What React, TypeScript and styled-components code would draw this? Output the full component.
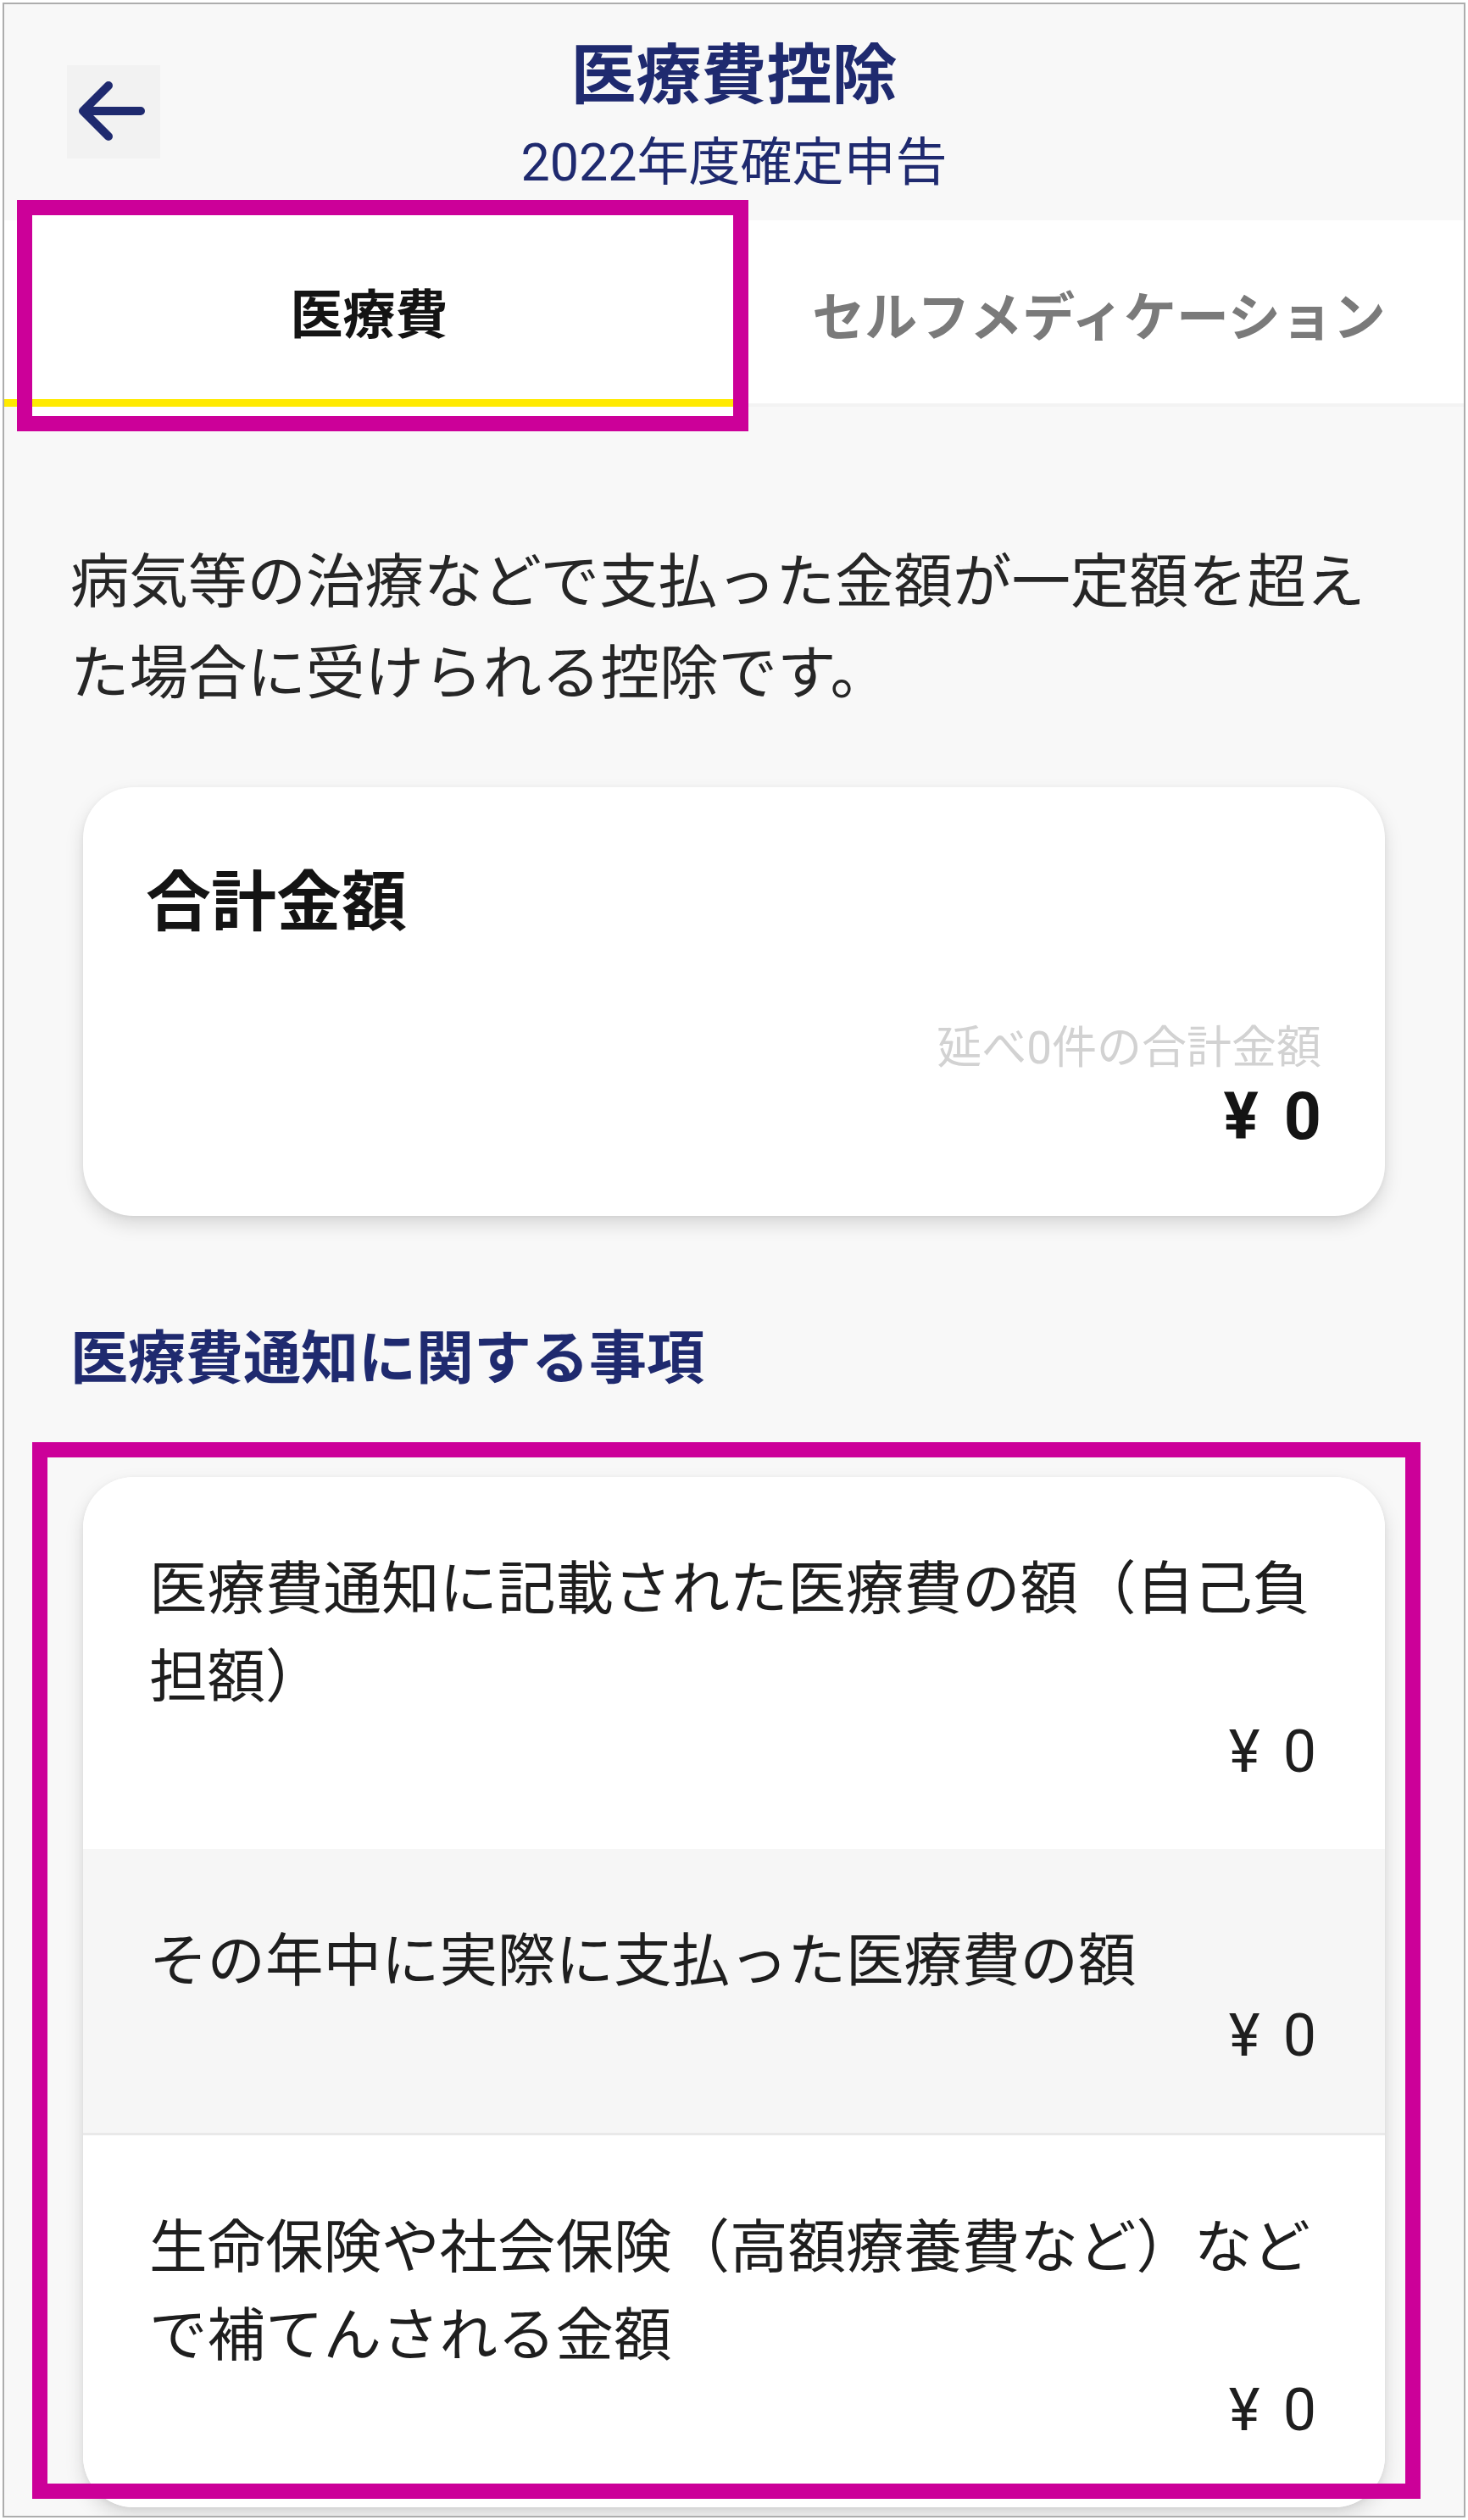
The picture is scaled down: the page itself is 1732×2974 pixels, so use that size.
import React from 'react';
import styled, { createGlobalStyle } from 'styled-components';

const NAVY = '#1f2a6f';
const MAGENTA = '#cc0099';

const GlobalStyle = createGlobalStyle`
  html, body {
    margin: 0;
    padding: 0;
    background: #ffffff;
  }
  body {
    font-family: Roboto, "Noto Sans CJK JP", sans-serif;
    -webkit-font-smoothing: antialiased;
  }
  * {
    box-sizing: border-box;
  }
`;

const Screen = styled.div`
  position: relative;
  margin: 3px;
  width: 1726px;
  height: 2968px;
  border: 2px solid #adadad;
  background: #f8f8f8;
  overflow: hidden;
`;

const Header = styled.header`
  display: grid;
  grid-template-columns: 1fr auto 1fr;
  height: 255px;
  padding-top: 35px;
`;

const BackButton = styled.button`
  justify-self: start;
  align-self: start;
  margin: 37px 0 0 74px;
  width: 110px;
  height: 110px;
  padding: 0;
  border: none;
  background: #f2f2f2;
  display: flex;
  align-items: center;
  justify-content: center;
  cursor: pointer;
`;

const TitleBlock = styled.div`
  display: flex;
  flex-direction: column;
  align-items: center;
  color: ${NAVY};
`;

const Title = styled.h1`
  margin: 0;
  font-size: 77px;
  font-weight: 700;
  line-height: 100px;
`;

const Subtitle = styled.div`
  margin-top: 2px;
  font-size: 61px;
  line-height: 100px;
`;

const TabBar = styled.nav`
  display: grid;
  grid-template-columns: 1fr 1fr;
  height: 220px;
  background: #ffffff;
`;

const Tab = styled.button<{ $active?: boolean }>`
  border: none;
  margin: 0;
  padding: 3px 0 0;
  background: transparent;
  font-family: inherit;
  font-size: 62px;
  font-weight: 700;
  color: ${(props) => (props.$active ? '#141414' : '#7a7a7a')};
  border-bottom: ${(props) => (props.$active ? '9px solid #ffea00' : '4px solid #f3f3f3')};
  cursor: pointer;
`;

const Intro = styled.p`
  margin: 0;
  padding: 154px 78px 0;
  font-size: 69.5px;
  line-height: 108px;
  color: #262626;
`;

const Card = styled.section<{ $gap: number }>`
  margin: ${(props) => props.$gap}px 93px 0;
  background: #ffffff;
  border-radius: 60px;
  overflow: hidden;
  box-shadow: 0 10px 22px rgba(0, 0, 0, 0.13), 0 2px 6px rgba(0, 0, 0, 0.06);
`;

const TotalBody = styled.div`
  padding: 87px 75px 69px 74px;
`;

const CardTitle = styled.h3`
  margin: 0;
  font-size: 77px;
  font-weight: 700;
  line-height: 100px;
  color: #141414;
`;

const CountLabel = styled.div`
  margin-top: 88px;
  text-align: right;
  font-size: 53px;
  line-height: 66px;
  color: #d2d2d2;
`;

const TotalAmount = styled.div`
  text-align: right;
  font-size: 77px;
  font-weight: 700;
  line-height: 96px;
  word-spacing: 0.14em;
  color: #141414;
`;

const SectionHeading = styled.h2`
  margin: 119px 0 0;
  padding: 0 78px;
  font-size: 68px;
  font-weight: 700;
  line-height: 100px;
  color: ${NAVY};
`;

const Row = styled.div<{ $shaded?: boolean; $divided?: boolean }>`
  padding: 81px 81px 80px 78px;
  background: ${(props) => (props.$shaded ? '#f6f6f6' : '#ffffff')};
  border-bottom: ${(props) => (props.$divided ? '3px solid #e9e9e9' : 'none')};
`;

const RowLabel = styled.div`
  font-size: 68.5px;
  line-height: 104px;
  color: #1e1e1e;
`;

const RowAmount = styled.div`
  text-align: right;
  font-size: 70px;
  line-height: 70px;
  word-spacing: 0.14em;
  color: #1e1e1e;
`;

const Annotation = styled.div<{ $left: number; $top: number; $width: number; $height: number; $inset?: string }>`
  position: absolute;
  left: ${(props) => props.$left}px;
  top: ${(props) => props.$top}px;
  width: ${(props) => props.$width}px;
  height: ${(props) => props.$height}px;
  border: 18px solid ${MAGENTA};
  box-shadow: ${(props) => props.$inset || 'none'};
  pointer-events: none;
`;

const BackArrow = () => (
  <svg width="110" height="110" viewBox="0 0 110 110" fill="none">
    <path
      d="M87 54H20M49 24L19 54L49 84"
      stroke={NAVY}
      strokeWidth="10"
      strokeLinecap="round"
      strokeLinejoin="round"
    />
  </svg>
);

const notices = [
  { label: '医療費通知に記載された医療費の額（自己負担額）', amount: '¥ 0' },
  { label: 'その年中に実際に支払った医療費の額', amount: '¥ 0', shaded: true, divided: true },
  { label: '生命保険や社会保険（高額療養費など）などで補てんされる金額', amount: '¥ 0' },
];

const App: React.FC = () => {
  return (
    <>
      <GlobalStyle />
      <Screen>
        <Header>
          <BackButton aria-label="戻る">
            <BackArrow />
          </BackButton>
          <TitleBlock>
            <Title>医療費控除</Title>
            <Subtitle>2022年度確定申告</Subtitle>
          </TitleBlock>
        </Header>

        <TabBar>
          <Tab $active>医療費</Tab>
          <Tab>セルフメディケーション</Tab>
        </TabBar>

        <Intro>病気等の治療などで支払った金額が一定額を超えた場合に受けられる控除です。</Intro>

        <Card $gap={79}>
          <TotalBody>
            <CardTitle>合計金額</CardTitle>
            <CountLabel>延べ0件の合計金額</CountLabel>
            <TotalAmount>¥ 0</TotalAmount>
          </TotalBody>
        </Card>

        <SectionHeading>医療費通知に関する事項</SectionHeading>

        <Card $gap={89}>
          {notices.map((item) => (
            <Row key={item.label} $shaded={item.shaded} $divided={item.divided}>
              <RowLabel>{item.label}</RowLabel>
              <RowAmount>{item.amount}</RowAmount>
            </Row>
          ))}
        </Card>

        <Annotation
          $left={15}
          $top={231}
          $width={863}
          $height={273}
          $inset="inset 0 6px 0 #ffffff, inset 0 -11px 0 #ffffff"
        />
        <Annotation $left={33} $top={1697} $width={1638} $height={1247} />
      </Screen>
    </>
  );
};

export default App;
